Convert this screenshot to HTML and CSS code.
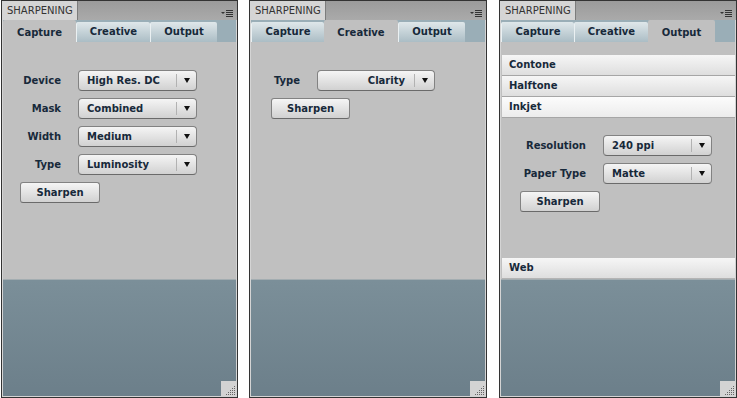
FILE: index.html
```html
<!DOCTYPE html>
<html>
<head>
<meta charset="utf-8">
<title>Sharpening</title>
<link rel="stylesheet" href="styles.css">
</head>
<body>
<div class="desk">

  <section class="panel panel-1">
    <header class="titlebar">
      <div class="title-tab">SHARPENING</div>
      <svg class="menu-icon" width="12" height="9" viewBox="0 0 12 9"><polygon points="0,3 4,3 2,5" fill="#333"/><rect x="5" y="1" width="7" height="1" fill="#333"/><rect x="5" y="3" width="7" height="1" fill="#333"/><rect x="5" y="5" width="7" height="1" fill="#333"/><rect x="5" y="7" width="7" height="1" fill="#333"/></svg>
    </header>
    <div class="inner">
      <nav class="tabs">
        <div class="tab tab-capture active">Capture</div>
        <div class="tab tab-creative">Creative</div>
        <div class="tab tab-output">Output</div>
      </nav>
      <div class="body">
        <div class="form form-capture">
          <span class="label">Device</span>
          <div class="select"><span class="select-value">High Res. DC</span><span class="select-arrow"></span></div>
          <span class="label">Mask</span>
          <div class="select"><span class="select-value">Combined</span><span class="select-arrow"></span></div>
          <span class="label">Width</span>
          <div class="select"><span class="select-value">Medium</span><span class="select-arrow"></span></div>
          <span class="label">Type</span>
          <div class="select"><span class="select-value">Luminosity</span><span class="select-arrow"></span></div>
        </div>
        <button class="btn btn-capture">Sharpen</button>
      </div>
      <footer class="footer">
        <svg class="grip" width="15" height="15" viewBox="0 0 15 15"><rect width="15" height="15" fill="#d3d3d3"/><g fill="#666"><rect x="13" y="5" width="1" height="1"/><rect x="11" y="7" width="1" height="1"/><rect x="13" y="7" width="1" height="1"/><rect x="9" y="9" width="1" height="1"/><rect x="11" y="9" width="1" height="1"/><rect x="13" y="9" width="1" height="1"/><rect x="7" y="11" width="1" height="1"/><rect x="9" y="11" width="1" height="1"/><rect x="11" y="11" width="1" height="1"/><rect x="13" y="11" width="1" height="1"/><rect x="5" y="13" width="1" height="1"/><rect x="7" y="13" width="1" height="1"/><rect x="9" y="13" width="1" height="1"/><rect x="11" y="13" width="1" height="1"/><rect x="13" y="13" width="1" height="1"/></g></svg>
      </footer>
    </div>
  </section>

  <section class="panel panel-2">
    <header class="titlebar">
      <div class="title-tab">SHARPENING</div>
      <svg class="menu-icon" width="12" height="9" viewBox="0 0 12 9"><polygon points="0,3 4,3 2,5" fill="#333"/><rect x="5" y="1" width="7" height="1" fill="#333"/><rect x="5" y="3" width="7" height="1" fill="#333"/><rect x="5" y="5" width="7" height="1" fill="#333"/><rect x="5" y="7" width="7" height="1" fill="#333"/></svg>
    </header>
    <div class="inner">
      <nav class="tabs">
        <div class="tab tab-capture">Capture</div>
        <div class="tab tab-creative active">Creative</div>
        <div class="tab tab-output">Output</div>
      </nav>
      <div class="body">
        <div class="form form-creative">
          <span class="label">Type</span>
          <div class="select"><span class="select-value select-value-right">Clarity</span><span class="select-arrow"></span></div>
        </div>
        <button class="btn btn-creative">Sharpen</button>
      </div>
      <footer class="footer">
        <svg class="grip" width="15" height="15" viewBox="0 0 15 15"><rect width="15" height="15" fill="#d3d3d3"/><g fill="#666"><rect x="13" y="5" width="1" height="1"/><rect x="11" y="7" width="1" height="1"/><rect x="13" y="7" width="1" height="1"/><rect x="9" y="9" width="1" height="1"/><rect x="11" y="9" width="1" height="1"/><rect x="13" y="9" width="1" height="1"/><rect x="7" y="11" width="1" height="1"/><rect x="9" y="11" width="1" height="1"/><rect x="11" y="11" width="1" height="1"/><rect x="13" y="11" width="1" height="1"/><rect x="5" y="13" width="1" height="1"/><rect x="7" y="13" width="1" height="1"/><rect x="9" y="13" width="1" height="1"/><rect x="11" y="13" width="1" height="1"/><rect x="13" y="13" width="1" height="1"/></g></svg>
      </footer>
    </div>
  </section>

  <section class="panel panel-3">
    <header class="titlebar">
      <div class="title-tab">SHARPENING</div>
      <svg class="menu-icon" width="12" height="9" viewBox="0 0 12 9"><polygon points="0,3 4,3 2,5" fill="#333"/><rect x="5" y="1" width="7" height="1" fill="#333"/><rect x="5" y="3" width="7" height="1" fill="#333"/><rect x="5" y="5" width="7" height="1" fill="#333"/><rect x="5" y="7" width="7" height="1" fill="#333"/></svg>
    </header>
    <div class="inner">
      <nav class="tabs">
        <div class="tab tab-capture">Capture</div>
        <div class="tab tab-creative">Creative</div>
        <div class="tab tab-output active">Output</div>
      </nav>
      <div class="body">
        <div class="list">
          <div class="list-item">Contone</div>
          <div class="list-item">Halftone</div>
          <div class="list-item list-item-open">Inkjet</div>
        </div>
        <div class="form form-output">
          <span class="label">Resolution</span>
          <div class="select"><span class="select-value">240 ppi</span><span class="select-arrow"></span></div>
          <span class="label">Paper Type</span>
          <div class="select"><span class="select-value">Matte</span><span class="select-arrow"></span></div>
        </div>
        <button class="btn btn-output">Sharpen</button>
        <div class="list-item list-item-web">Web</div>
      </div>
      <footer class="footer">
        <svg class="grip" width="15" height="15" viewBox="0 0 15 15"><rect width="15" height="15" fill="#d3d3d3"/><g fill="#666"><rect x="13" y="5" width="1" height="1"/><rect x="11" y="7" width="1" height="1"/><rect x="13" y="7" width="1" height="1"/><rect x="9" y="9" width="1" height="1"/><rect x="11" y="9" width="1" height="1"/><rect x="13" y="9" width="1" height="1"/><rect x="7" y="11" width="1" height="1"/><rect x="9" y="11" width="1" height="1"/><rect x="11" y="11" width="1" height="1"/><rect x="13" y="11" width="1" height="1"/><rect x="5" y="13" width="1" height="1"/><rect x="7" y="13" width="1" height="1"/><rect x="9" y="13" width="1" height="1"/><rect x="11" y="13" width="1" height="1"/><rect x="13" y="13" width="1" height="1"/></g></svg>
      </footer>
    </div>
  </section>

</div>
</body>
</html>
```

FILE: styles.css
```css
* { box-sizing: border-box; }

body {
  margin: 0;
  background: #ffffff;
  font-family: "DejaVu Sans", Verdana, sans-serif;
  font-size: 10px;
  font-weight: bold;
  color: #17293a;
}

.desk {
  display: flex;
  align-items: flex-start;
  padding-left: 1px;
}

.panel {
  width: 238px;
  height: 398px;
  border: 1px solid #333333;
  background: #d4d4d4;
  display: flex;
  flex-direction: column;
}

.desk .panel-1 { width: 237px; }
.desk .panel-2 { margin-left: 11px; }
.desk .panel-3 { margin-left: 12px; }

/* title bar */
.titlebar {
  height: 19px;
  display: flex;
  align-items: flex-start;
  background: linear-gradient(#9b9b9b, #aaaaaa);
}

.title-tab {
  width: 76px;
  height: 19px;
  background: #d5d5d5;
  border-right: 1px solid #7c7c7c;
  padding: 3px 0 0 5px;
  font-weight: normal;
  color: #333333;
  line-height: 14px;
}

.menu-icon {
  margin-left: auto;
  margin-right: 4px;
  margin-top: 8px;
}

.inner {
  flex: 1;
  display: flex;
  flex-direction: column;
  margin: 0 1px 1px 1px;
}

/* tabs */
.tabs {
  height: 22px;
  display: flex;
  background: #9aaeb7;
}

.tab {
  margin-top: 2px;
  height: 20px;
  line-height: 19px;
  text-align: center;
  background: linear-gradient(#dfe7ea, #abbdc5);
  border-left: 1px solid #eaf0f2;
  border-top-left-radius: 2px;
  border-top-right-radius: 2px;
}

.tab.active {
  margin-top: 0;
  height: 22px;
  padding-top: 3px;
  background: #c0c0c0;
  border-left: none;
}

.tab-capture { width: 73px; }
.tab-creative { width: 74px; }
.tab-output { width: 67px; }

/* body */
.body {
  height: 237px;
  background: #c0c0c0;
  display: flex;
  flex-direction: column;
  align-items: flex-start;
}

.footer {
  flex: 1;
  border-top: 1px solid #a3adb1;
  background: linear-gradient(#7b8f99, #6c7f8a);
  display: flex;
  justify-content: flex-end;
  align-items: flex-end;
}

.grip { display: block; }

/* forms */
.form {
  display: grid;
  column-gap: 17px;
  row-gap: 7px;
  align-items: center;
}

.form-capture { grid-template-columns: 58px 119px; margin-top: 28px; }
.form-creative { grid-template-columns: 49px 118px; margin-top: 28px; }
.form-output { grid-template-columns: 85px 109px; margin-top: 17px; }

.label {
  justify-self: end;
  white-space: nowrap;
}

.select {
  height: 21px;
  display: flex;
  align-items: center;
  border: 1px solid #828282;
  border-bottom-color: #6a6a6a;
  border-radius: 4px;
  background: linear-gradient(#f5f5f5, #d1d1d1);
}

.select-value {
  flex: 1;
  padding-left: 8px;
  white-space: nowrap;
}

.select-value-right {
  text-align: right;
  padding-right: 9px;
}

.select-arrow {
  width: 20px;
  height: 13px;
  border-left: 1px solid #b2b2b2;
  display: flex;
  align-items: center;
  justify-content: center;
}

.select-arrow::after {
  content: "";
  width: 0;
  height: 0;
  border-left: 3.5px solid transparent;
  border-right: 3.5px solid transparent;
  border-top: 5px solid #111111;
  margin-left: 1px;
}

.btn {
  height: 21px;
  width: 80px;
  margin-top: 7px;
  padding: 0;
  border: 1px solid #828282;
  border-bottom-color: #6a6a6a;
  border-radius: 3px;
  background: linear-gradient(#f5f5f5, #d1d1d1);
  font: inherit;
  color: inherit;
}

.btn-capture { margin-left: 17px; }
.btn-creative { margin-left: 20px; width: 79px; }
.btn-output { margin-left: 19px; }

/* list */
.list {
  margin: 13px 0 0 1px;
  align-self: stretch;
}

.list-item {
  height: 21px;
  line-height: 20px;
  padding-left: 7px;
  border-bottom: 1px solid #a6a6a6;
  background: linear-gradient(#f6f6f6, #dedede);
}

.list-item-open {
  background: linear-gradient(#fcfcfc, #ececec);
}

.list-item-web {
  margin: auto 0 0 1px;
  align-self: stretch;
  border-bottom-color: #b4b4b4;
}
```
